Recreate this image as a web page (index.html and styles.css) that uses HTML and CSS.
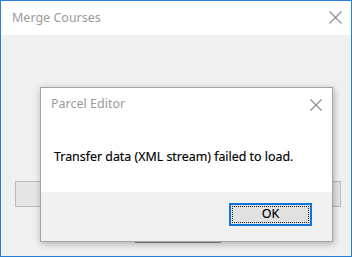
FILE: index.html
```html
<!DOCTYPE html>
<html>
<head>
<meta charset="utf-8">
<link rel="stylesheet" href="styles.css">
</head>
<body>
<div class="window">
  <div class="titlebar">
    <span class="title">Merge Courses</span>
    <svg class="close" width="13" height="13" viewBox="0 0 13 13"><path d="M0.5 0.5 L12.5 12.5 M12.5 0.5 L0.5 12.5" stroke="#8a8a8a" stroke-width="1.1" fill="none"/></svg>
  </div>
  <div class="content">
    <div class="wide-btn"></div>
    <div class="small-btn"></div>
  </div>
  <div class="dialog">
    <div class="dlg-title">
      <span class="title">Parcel Editor</span>
      <svg class="close" width="12" height="12" viewBox="0 0 12 12"><path d="M0.5 0.5 L11.5 11.5 M11.5 0.5 L0.5 11.5" stroke="#8a8a8a" stroke-width="1.1" fill="none"/></svg>
    </div>
    <div class="dlg-msg">Transfer data (XML stream) failed to load.</div>
    <div class="dlg-foot">
      <button class="ok"><span class="focus">OK</span></button>
    </div>
  </div>
</div>
</body>
</html>
```
FILE: styles.css
```css
html, body {
  margin: 0;
  padding: 0;
  background: #ffffff;
}
body {
  width: 352px;
  height: 258px;
  font-family: "Noto Sans", "Open Sans", sans-serif;
  font-size: 12px;
}
.window {
  position: relative;
  box-sizing: border-box;
  width: 352px;
  height: 257px;
  border: 1px solid #2b7ed6;
  display: flex;
  flex-direction: column;
  background: #f0f0f0;
}
.titlebar {
  height: 34px;
  background: #ffffff;
  display: flex;
  align-items: center;
  justify-content: space-between;
  padding: 0 9px 0 11px;
}
.titlebar .title {
  color: #9a9a9a;
  font-size: 12.5px;
  margin-top: -2px;
}
.titlebar .close {
  margin-top: -1px;
}
.content {
  flex: 1;
  display: flex;
  flex-direction: column;
  align-items: flex-start;
}
.wide-btn {
  margin: 146px 0 0 14px;
  width: 324px;
  height: 24px;
  border: 1px solid #bcbcbc;
  background: #e5e5e5;
}
.small-btn {
  margin: 13px 0 0 134px;
  width: 84px;
  height: 21px;
  border: 1px solid #8c8c8c;
  background: #e1e1e1;
}
.dialog {
  position: absolute;
  left: 39px;
  top: 86px;
  width: 291px;
  height: 153px;
  border: 1px solid #a3a3a3;
  background: #ffffff;
  box-shadow: 1px 2px 7px rgba(0, 0, 0, 0.28);
  display: flex;
  flex-direction: column;
}
.dlg-title {
  height: 33px;
  display: flex;
  align-items: center;
  justify-content: space-between;
  padding: 0 10px 0 10px;
}
.dlg-title .title {
  color: #9a9a9a;
  font-size: 12.5px;
  margin-top: -2px;
}
.dlg-msg {
  flex: 1;
  padding: 27px 0 0 13px;
  color: #000000;
  font-size: 12.4px;
  -webkit-text-stroke: 0.15px #000000;
}
.dlg-foot {
  height: 49px;
  background: #f0f0f0;
  display: flex;
  justify-content: flex-end;
  align-items: flex-start;
  padding: 0 20px 0 0;
}
.ok {
  margin-top: 11px;
  width: 83px;
  height: 23px;
  box-sizing: border-box;
  border: 2px solid #0f76d8;
  background: #e1e1e1;
  padding: 1px;
  font-family: "Noto Sans", "Open Sans", sans-serif;
  font-size: 12.5px;
  color: #000000;
  display: flex;
}
.focus {
  flex: 1;
  border: 1px dotted #222222;
  display: flex;
  align-items: center;
  justify-content: center;
  line-height: 1;
  -webkit-text-stroke: 0.15px #000000;
}
```
